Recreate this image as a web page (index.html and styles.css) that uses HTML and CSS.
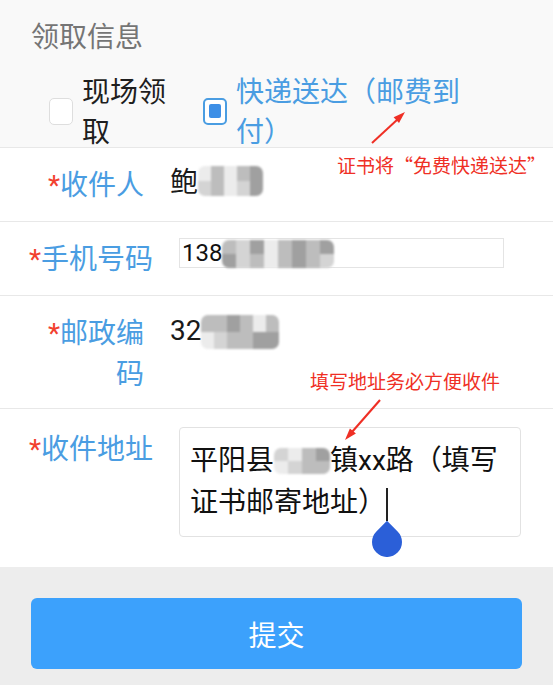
FILE: index.html
```html
<!DOCTYPE html>
<html lang="zh-CN">
<head>
    <meta charset="UTF-8">
    <meta name="viewport" content="width=device-width, initial-scale=1.0">
    <title>领取信息</title>
    <link rel="stylesheet" href="styles.css">
</head>
<body>
    <div class="page">
        <section class="pick">
            <h2 class="pick-title">领取信息</h2>
            <div class="options">
                <div class="option option-self">
                    <span class="check"></span>
                    <span class="option-text">现场领取</span>
                </div>
                <div class="option option-post">
                    <span class="check"><span class="check-dot"></span></span>
                    <span class="option-text">快递送达（邮费到付）</span>
                </div>
            </div>
        </section>

        <div class="row">
            <div class="label"><em>*</em>收件人</div>
            <div class="value">鲍<span class="mosaic mosaic-name"><i class="s1"></i><i class="s3"></i><i class="s1"></i><i class="s3"></i><i class="s4"></i><i class="s2"></i><i class="s3"></i><i class="s1"></i><i class="s2"></i><i class="s4"></i></span></div>
        </div>

        <div class="row">
            <div class="label label-wide"><em>*</em>手机号码</div>
            <div class="field">138<span class="mosaic mosaic-phone"><i class="s3"></i><i class="s2"></i><i class="s4"></i><i class="s1"></i><i class="s3"></i><i class="s4"></i><i class="s3"></i><i class="s4"></i><i class="s4"></i><i class="s2"></i><i class="s3"></i><i class="s1"></i><i class="s3"></i><i class="s4"></i><i class="s3"></i><i class="s2"></i></span></div>
        </div>

        <div class="row row-zip">
            <div class="label"><em>*</em>邮政编码</div>
            <div class="value">32<span class="mosaic mosaic-zip"><i class="s3"></i><i class="s3"></i><i class="s4"></i><i class="s3"></i><i class="s1"></i><i class="s3"></i><i class="s1"></i><i class="s2"></i><i class="s3"></i><i class="s3"></i><i class="s4"></i><i class="s4"></i></span></div>
        </div>

        <div class="row row-addr">
            <div class="label label-wide"><em>*</em>收件地址</div>
            <div class="area">平阳县<span class="mosaic mosaic-addr"><i class="s2"></i><i class="s1"></i><i class="s3"></i><i class="s4"></i><i class="s1"></i><i class="s2"></i><i class="s3"></i><i class="s3"></i></span>镇xx路（填写证书邮寄地址）<span class="caret"><svg class="handle" width="30" height="39" viewBox="0 0 30 39"><path d="M15 2.8 L25.6 13.4 A15 15 0 1 1 4.4 13.4 Z" fill="#2b5fd8"/></svg></span></div>
        </div>

        <div class="footer">
            <button class="btn">提交</button>
        </div>

        <!-- 截图上的红色标注 -->
        <div class="note note-post">证书将“免费快递送达”</div>
        <div class="note note-addr">填写地址务必方便收件</div>
        <svg class="arrows" width="553" height="685" viewBox="0 0 553 685">
            <line x1="372" y1="143" x2="398" y2="119" stroke="#ef2f25" stroke-width="2"/>
            <polygon points="405,112 399,123.1 393.6,117.3" fill="#ef2f25"/>
            <line x1="380" y1="400" x2="352" y2="432" stroke="#ef2f25" stroke-width="2"/>
            <polygon points="345,440 355.9,433.6 349.9,428.4" fill="#ef2f25"/>
        </svg>
    </div>
</body>
</html>
```

FILE: styles.css
```css
* {
    box-sizing: border-box;
}
body {
    margin: 0;
    font-family: Roboto, "Noto Sans CJK SC", sans-serif;
    background-color: #fff;
}
.page {
    position: relative;
    width: 553px;
    height: 685px;
    overflow: hidden;
    background-color: #fff;
}

/* 领取方式 */
.pick {
    height: 148px;
    padding-top: 17px;
    background-color: #f9f9f9;
    border-bottom: 1px solid #e8e8e8;
}
.pick-title {
    margin: 0 0 15px 31px;
    font-size: 28px;
    line-height: 41px;
    font-weight: normal;
    color: #757575;
}
.options {
    display: flex;
    align-items: center;
    padding-left: 49px;
}
.option {
    display: flex;
    align-items: center;
    font-size: 28px;
    line-height: 40px;
    color: #1e1e1e;
}
.option-text {
    margin-left: 9px;
}
.option-self .option-text {
    width: 100px;
}
.option-post {
    margin-left: 21px;
    color: #4a9de2;
}
.option-post .option-text {
    width: 240px;
}
.check {
    flex: 0 0 auto;
    display: flex;
    align-items: center;
    justify-content: center;
    width: 24px;
    height: 27px;
    margin-top: -4px;
    border: 1.5px solid #dedede;
    border-radius: 5px;
    background-color: #fff;
}
.option-post .check {
    border: 2px solid #4a9de2;
}
.check-dot {
    width: 12px;
    height: 14px;
    border-radius: 2px;
    background-color: #3d8fe6;
}

/* 表单行 */
.row {
    display: flex;
    align-items: flex-start;
    padding: 14px 0 15px;
    border-bottom: 1px solid #e8e8e8;
    background-color: #fff;
}
.row-zip {
    padding-bottom: 13px;
}
.row-addr {
    padding-bottom: 30px;
    border-bottom: 0;
}
.label {
    flex: 0 0 auto;
    width: 122px;
    margin-left: 22px;
    padding-top: 3px;
    text-align: right;
    font-size: 28px;
    line-height: 41px;
    color: #4a9de2;
}
.label-wide {
    width: 131px;
}
.row-addr .label {
    padding-top: 6px;
}
.label em {
    font-style: normal;
    color: #f2412f;
}
.value {
    margin-left: 26px;
    font-size: 28px;
    line-height: 41px;
    color: #1a1a1a;
}
.field {
    display: flex;
    align-items: center;
    width: 325px;
    height: 30px;
    margin: 2px 0 0 26px;
    padding-left: 2px;
    border: 1px solid #e4e4e4;
    font-size: 24px;
    line-height: 28px;
    color: #111;
}
.area {
    position: relative;
    width: 342px;
    margin: 4px 0 0 26px;
    padding: 12px 10px;
    border: 1px solid #e2e2e2;
    border-radius: 4px;
    font-size: 28px;
    line-height: 42px;
    color: #111;
}
.caret {
    position: relative;
    display: inline-block;
    width: 2px;
    height: 33px;
    vertical-align: middle;
    background-color: #222;
}
.handle {
    position: absolute;
    top: 30px;
    left: -14px;
    display: block;
}

/* 打码 */
.mosaic {
    display: inline-grid;
    vertical-align: top;
    border-radius: 7px;
    overflow: hidden;
    filter: blur(1.2px);
}
.mosaic i {
    display: block;
}
.mosaic .s1 { background-color: #ececec; }
.mosaic .s2 { background-color: #d4d4d4; }
.mosaic .s3 { background-color: #bdbdbd; }
.mosaic .s4 { background-color: #a0a0a0; }
.mosaic-name {
    grid-template-columns: repeat(5, 13px);
    grid-auto-rows: 15px;
    margin-top: 4px;
}
.mosaic-phone {
    grid-template-columns: repeat(8, 14px);
    grid-auto-rows: 14px;
    margin-top: 2px;
}
.mosaic-zip {
    grid-template-columns: repeat(6, 13px);
    grid-auto-rows: 17px;
    margin-top: 5px;
}
.mosaic-addr {
    grid-template-columns: repeat(4, 14px);
    grid-auto-rows: 13px;
    margin-top: 8px;
}

/* 提交 */
.footer {
    height: 118px;
    padding: 31px 31px 0;
    background-color: #ededed;
}
.btn {
    display: block;
    width: 100%;
    height: 71px;
    border: 0;
    border-radius: 6px;
    background-color: #3ca1fc;
    color: #fff;
    font-family: inherit;
    font-size: 28px;
}

/* 标注 */
.note {
    position: absolute;
    font-family: "Noto Sans CJK SC", sans-serif;
    line-height: 1;
    color: #ef2f25;
    white-space: nowrap;
}
.note-post {
    top: 155px;
    left: 337px;
    font-size: 19px;
}
.note-addr {
    top: 371px;
    left: 310px;
    font-size: 19px;
}
.arrows {
    position: absolute;
    top: 0;
    left: 0;
    pointer-events: none;
}
```
